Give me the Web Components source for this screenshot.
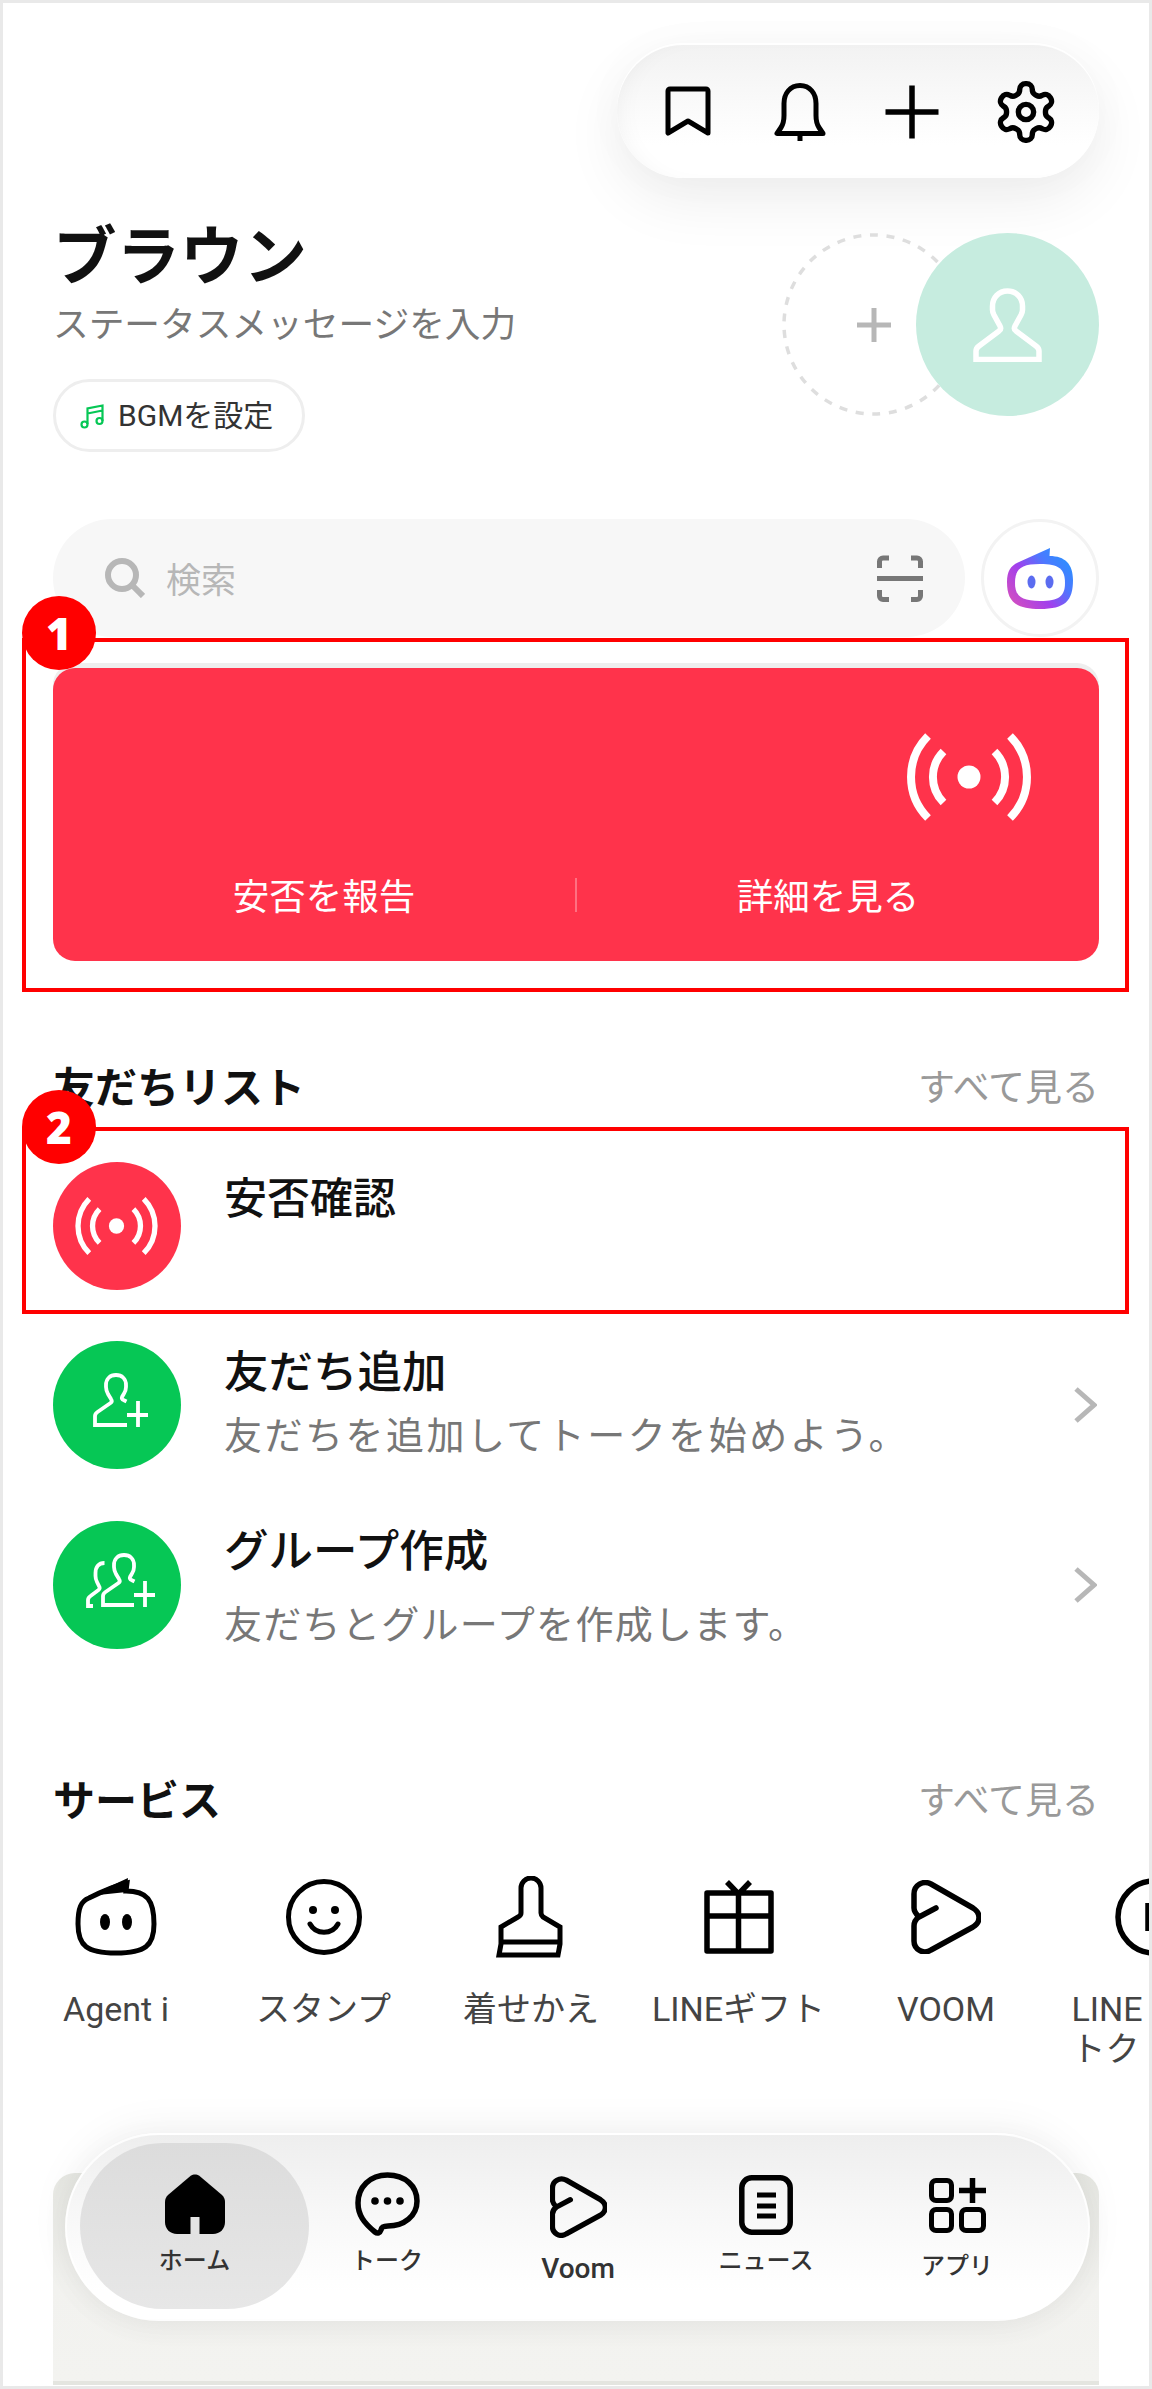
<!DOCTYPE html>
<html lang="ja"><head><meta charset="utf-8"><title>LINE</title>
<style>
html,body{margin:0;padding:0;background:#fff}
body{font-family:Roboto,"Noto Sans CJK JP",sans-serif;color:#111}
</style></head>
<body>
<line-app>
  <line-toolbar>
    <line-icon name="bookmark"></line-icon>
    <line-icon name="bell"></line-icon>
    <line-icon name="plus"></line-icon>
    <line-icon name="gear"></line-icon>
  </line-toolbar>
  <line-profile name="ブラウン" status="ステータスメッセージを入力" bgm="BGMを設定"></line-profile>
  <line-search placeholder="検索"></line-search>
  <note-box n="1" style="--pt:26px;--pb:27px;--bt:-46px">
    <line-safety report="安否を報告" details="詳細を見る"></line-safety>
  </note-box>
  <line-head more="すべて見る" style="--mt:68px">友だちリスト</line-head>
  <note-box n="2" style="--mt:17px;--pt:31px;--pb:20px;--bt:-41px">
    <line-row icon="broadcast-s" color="#ff334b" style="--mt:0px;--t:5px;--fs:43px"><span slot="title">安否確認</span></line-row>
  </note-box>
  <line-row icon="add" color="#06c755" chev style="--mt:27px;--t:0px;--g:12px;--ls:2.500px"><span slot="title">友だち追加</span><span slot="sub">友だちを追加してトークを始めよう。</span></line-row>
  <line-row icon="group" color="#06c755" chev style="--mt:52px;--t:-1px;--g:22px;--ls:1.300px"><span slot="title">グループ作成</span><span slot="sub">友だちとグループを作成します。</span></line-row>
  <line-head more="すべて見る" style="--mt:124px">サービス</line-head>
  <line-services>
    <line-service icon="agent">Agent i</line-service>
    <line-service icon="smile">スタンプ</line-service>
    <line-service icon="brush">着せかえ</line-service>
    <line-service icon="gift">LINEギフト</line-service>
    <line-service icon="voom">VOOM</line-service>
    <line-service icon="clipped" style="--align:left;--pl:6px">LINE<br>トク</line-service>
  </line-services>
  <line-banner></line-banner>
  <line-nav>
    <nav-item icon="home" active style="--w:229px;--t:31px;--g:12px">ホーム</nav-item>
    <nav-item icon="talk" style="--w:156px;--t:29px;--g:9px">トーク</nav-item>
    <nav-item icon="voom-s" style="--w:226px;--t:33px;--g:16px;--fs:28px">Voom</nav-item>
    <nav-item icon="news" style="--w:150px;--t:32px;--g:11px">ニュース</nav-item>
    <nav-item icon="apps" style="--w:232px;--t:35px;--g:18px">アプリ</nav-item>
  </line-nav>
</line-app>
<script>
const S='fill="none" stroke="currentColor" stroke-linecap="round" stroke-linejoin="round"';
const voom='<path d="M25 28 8 37C5 34 3 31 3 28V14C3 5 12 0 20 4L62 28C70 33 70 42 62 47L20 70C12 75 3 69 3 61V46C3 42 5 39 8 37"/>';
const bc=(w,h)=>`<svg width="${w}" height="${h}" viewBox="-64 -45 128 90"><circle r="11.5" fill="#fff"/><path fill="none" stroke="#fff" stroke-width="8" d="M-25.5-25.5A36 36 0 0 0-25.5 25.5M25.5-25.5A36 36 0 0 1 25.5 25.5M-41-41A58 58 0 0 0-41 41M41-41A58 58 0 0 1 41 41"/></svg>`;
const ICONS={
 bookmark:`<svg width="64" height="64" viewBox="0 0 64 64" ${S} stroke-width="5"><path d="M14 9h36a2 2 0 0 1 2 2v42L32 41 12 53V11a2 2 0 0 1 2-2z"/></svg>`,
 bell:`<svg width="64" height="64" viewBox="0 0 64 64" ${S} stroke-width="5"><path d="M32 5.500c-10 0-16 8-16 18v12c0 6-1 9-3 12l-4 6h46l-4-6c-2-3-3-6-3-12v-12c0-10-6-18-16-18z"/><path stroke-linecap="butt" d="M32 53v8"/></svg>`,
 plus:`<svg width="64" height="64" viewBox="0 0 64 64" fill="none" stroke="currentColor" stroke-width="5.500"><path d="M32 5.500v53M5.500 32h53"/></svg>`,
 gear:`<svg width="68" height="68" viewBox="0 0 24 24" ${S} stroke-width="1.9"><path d="M12.220 2h-.44a2 2 0 0 0-2 2v.18a2 2 0 0 1-1 1.730l-.43.25a2 2 0 0 1-2 0l-.15-.08a2 2 0 0 0-2.730.73l-.22.38a2 2 0 0 0 .73 2.730l.15.1a2 2 0 0 1 1 1.720v.51a2 2 0 0 1-1 1.740l-.15.09a2 2 0 0 0-.73 2.730l.22.38a2 2 0 0 0 2.730.73l.15-.08a2 2 0 0 1 2 0l.43.25a2 2 0 0 1 1 1.730V20a2 2 0 0 0 2 2h.44a2 2 0 0 0 2-2v-.18a2 2 0 0 1 1-1.730l.43-.25a2 2 0 0 1 2 0l.15.08a2 2 0 0 0 2.730-.73l.22-.39a2 2 0 0 0-.73-2.730l-.15-.08a2 2 0 0 1-1-1.740v-.5a2 2 0 0 1 1-1.740l.15-.09a2 2 0 0 0 .73-2.730l-.22-.38a2 2 0 0 0-2.730-.73l-.15.08a2 2 0 0 1-2 0l-.43-.25a2 2 0 0 1-1-1.730V4a2 2 0 0 0-2-2z"/><circle cx="12" cy="12" r="2.700"/></svg>`,
 person:`<svg width="69" height="74" viewBox="0 0 69 74" fill="none" stroke="#fff" stroke-width="5.500"><path d="M34.500 3c-9 0-15 7-15 15v4c0 2 .5 3 1.500 5l6 11c1 2 .5 4-1 5L6 58c-2 1.500-3 3-3 5v8.500h63V63c0-2-1-3.500-3-5L43 43c-1.500-1-2-3-1-5l6-11c1-2 1.500-3 1.500-5v-4c0-8-6-15-15-15z"/></svg>`,
 music:`<svg width="24" height="27" viewBox="0 0 24 27" fill="none" stroke="#06c755" stroke-width="2.200"><path d="M7.500 22V6.500L22.500 3.500V19M7.500 11.500 22.500 8.500"/><circle cx="4.500" cy="22.500" r="3"/><circle cx="19.500" cy="19" r="3"/></svg>`,
 search:`<svg width="40" height="40" viewBox="0 0 40 40" fill="none" stroke="#b7b7b7" stroke-width="6"><circle cx="17" cy="17" r="14"/><path d="M27 27 38 38"/></svg>`,
 scan:`<svg width="46" height="47" viewBox="0 0 46 47" fill="none" stroke="#777" stroke-width="5"><path d="M12 3H6A3.500 3.500 0 0 0 2.500 6.500V13M34 3h6a3.500 3.500 0 0 1 3.500 3.500V13M12 44.500H6A3.500 3.500 0 0 1 2.500 41V35M34 44.500h6a3.500 3.500 0 0 0 3.500-3.500V35M0 23.500H46"/></svg>`,
 logo:`<svg width="66" height="62" viewBox="0 0 66 62"><defs><linearGradient id="g" x1="0.05" y1="0.9" x2="0.95" y2="0.2"><stop offset="0" stop-color="#d34fc0"/><stop offset=".4" stop-color="#a23fec"/><stop offset=".72" stop-color="#4d78ff"/><stop offset="1" stop-color="#2b90ff"/></linearGradient></defs><path fill="url(#g)" d="M12 15 43 1l-.5 8C58 9 66 17 66 33 66 54 58 62 33 62 8 62 0 54 0 35 0 24 4 18 12 15z"/><path fill="#fff" d="M33 17C52 17 58 22 58 36 58 49 52 54 33 54 14 54 8 49 8 36 8 22 14 17 33 17z"/><ellipse cx="24.500" cy="35" rx="4" ry="6.500" fill="#5b6cf0"/><ellipse cx="42.500" cy="35" rx="4" ry="6.500" fill="#5b6cf0"/></svg>`,
 'broadcast-l':bc(128,90),
 'broadcast-s':bc(85,60),
 add:`<svg width="128" height="128" viewBox="0 0 128 128" fill="none" stroke="#fff" stroke-width="3.800"><path d="M74 84H42V75c0-2 1-3 2.500-4l13-9c1.500-1 1.500-2.500.5-4l-3-5c-1-2-2-4-2-7v-2c0-6 4-10 10-10s10 4 10 10v2c0 3-1 5-2 6.500l-2 3.500c-.5 1 0 2.500 1.500 3l3 1.500M85 60v26M74 74h21"/></svg>`,
 group:`<svg width="128" height="128" viewBox="0 0 128 128" fill="none" stroke="#fff" stroke-width="3.800"><path d="M81 84H50V75c0-2 1-3 2.500-4l13-9c1.500-1 1.500-2.500.5-4l-3-5c-1-2-2-4-2-7v-2c0-6 4-10 10-10s10 4 10 10v2c0 3-1 5-2 6.500l-2 3.500c-.5 1 0 2.500 1.500 3l3 1.500M92 60v26M81 74h21M40 85h-5v-6c0-2 1-3 2.500-4l8-6c1.500-1 1.500-2.500.5-4l-2-4c-1-2-1.500-4-1.500-6v-3c0-6 3-10 9-10"/></svg>`,
 chev:`<svg width="24" height="38" viewBox="0 0 24 38" fill="none" stroke="#b7b7b7" stroke-width="5"><path d="M3 3 21 19 3 35"/></svg>`,
 agent:`<svg width="82" height="78" viewBox="0 0 82 78"><path fill="none" stroke="currentColor" stroke-width="5" d="M14 20C28 13 40 8 52 5l-1 8C72 13 79 22 79 46 79 68 70 75 41 75 12 75 3 68 3 46 3 30 6 23 14 20z"/><path fill="currentColor" d="M14 18 53 0l-1.500 14z"/><ellipse cx="30" cy="44" rx="5" ry="8" fill="currentColor"/><ellipse cx="52" cy="44" rx="5" ry="8" fill="currentColor"/></svg>`,
 smile:`<svg width="78" height="78" viewBox="0 0 78 78" ${S} stroke-width="5"><circle cx="39" cy="39" r="35.500"/><circle cx="28" cy="32" r="4" fill="currentColor" stroke="none"/><circle cx="50" cy="32" r="4" fill="currentColor" stroke="none"/><path d="M25 46C31 57 47 57 53 46"/></svg>`,
 brush:`<svg width="72" height="82" viewBox="0 0 72 82" fill="none" stroke="currentColor" stroke-width="5"><path d="M26 37V12a10 10 0 0 1 20 0V37c0 2 1 3 2 4l17 10V68l-2 11H4L6 68V51l17-10c2-1 3-2 3-4zM6 66H65"/></svg>`,
 gift:`<svg width="70" height="74" viewBox="0 0 70 74" fill="none" stroke="currentColor" stroke-width="5.500" stroke-linejoin="round"><path d="M3 13H67V71H3zM34.500 13V71M3 36H67M23 2 34.500 14 46 2"/></svg>`,
 voom:`<svg width="70" height="74" viewBox="0 0 70 74" fill="none" stroke="currentColor" stroke-width="5.500" stroke-linecap="round" stroke-linejoin="round">${voom}</svg>`,
 'voom-s':`<svg width="57" height="62" viewBox="0 0 70 74" fill="none" stroke="currentColor" stroke-width="6.500" stroke-linecap="round" stroke-linejoin="round">${voom}</svg>`,
 clipped:`<svg width="80" height="80" viewBox="0 0 80 80" fill="none" stroke="currentColor" stroke-width="5.500"><circle cx="40" cy="40" r="36"/><path d="M34 26V54"/></svg>`,
 home:`<svg width="60" height="60" viewBox="0 0 60 60"><path fill="#000" d="M26 1.500 3 21C1 23 0 25 0 28V48C0 55 5 60 12 60H48C55 60 60 55 60 48V28C60 25 59 23 57 21L34 1.500C32 0 28 0 26 1.500z"/><rect x="25.500" y="43" width="9" height="17" fill="#e3e3e3"/></svg>`,
 talk:`<svg width="65" height="65" viewBox="0 0 65 65" fill="none" stroke="currentColor" stroke-width="5.500" stroke-linejoin="round"><path d="M32.500 3C15 3 3 15 3 31 3 43 9 51 20 60 22.500 62 25 61 26 58 26.500 55 28 54 33 54 49 54 62 44 62 29 62 14 50 3 32.500 3z"/><g fill="currentColor" stroke="none"><circle cx="20" cy="29" r="3.800"/><circle cx="32.500" cy="29" r="3.800"/><circle cx="45" cy="29" r="3.800"/></g></svg>`,
 news:`<svg width="54" height="60" viewBox="0 0 54 60" fill="none" stroke="currentColor" stroke-width="5.500"><rect x="2.800" y="2.800" width="48.400" height="54.400" rx="10"/><path stroke-width="5" d="M18 20H37M18 31H37M18 41H37"/></svg>`,
 apps:`<svg width="57" height="55" viewBox="0 0 57 55" fill="none" stroke="currentColor" stroke-width="5"><rect x="2.500" y="2.500" width="20" height="20" rx="4.500"/><rect x="2.500" y="31.500" width="20" height="21" rx="4.500"/><rect x="32.500" y="31.500" width="22" height="21" rx="4.500"/><path stroke-width="5.500" d="M43.500 0V25M30 12.500H57"/></svg>`
};
function comp(tag,css,html){
  customElements.define(tag,class extends HTMLElement{
    constructor(){super();this.attachShadow({mode:'open'});}
    connectedCallback(){
      const a=n=>this.getAttribute(n)||'';
      this.shadowRoot.innerHTML='<style>'+css+'</style>'+(typeof html==='function'?html(a,this):html);
    }
  });
}
const icon=n=>'<line-icon name="'+n+'"></line-icon>';
comp('line-icon',':host{display:inline-flex;line-height:0;flex:none}svg{display:block}',(a)=>ICONS[a('name')]);
comp('line-app',`:host{display:block;box-sizing:border-box;position:relative;width:1152px;height:2389px;border:3px solid #e9e9e9;padding:0 50px 0 50px;overflow:hidden;background:#fff}`,'<slot></slot>');
comp('line-toolbar',`:host{display:flex;align-items:center;box-sizing:border-box;width:482px;height:133px;margin:42px 0 0 auto;padding-left:39px;gap:48px;border-radius:67px;color:#000;
  background:linear-gradient(#f2f2f2,#fafafa 45%,#fff 75%);box-shadow:inset 14px 0 24px -14px rgba(0,0,0,.05),0 -2px 0 #fff,0 22px 60px rgba(0,0,0,.07),0 0 50px rgba(0,0,0,.025)}`,'<slot></slot>');
comp('line-profile',`:host{display:flex;justify-content:space-between;margin-top:38px;height:236px}
 h1{margin:0;font:700 63.500px/70px "Noto Sans CJK JP",sans-serif;color:#111}
 p{margin:14px 0 0;font:400 35.700px/44px "Noto Sans CJK JP",sans-serif;color:#777}
 .bgm{display:inline-flex;align-items:center;gap:14px;box-sizing:border-box;height:73px;width:252px;margin-top:35px;padding-left:24px;border:3px solid #eee;border-radius:37px;font:400 30px/36px Roboto,"Noto Sans CJK JP",sans-serif;color:#333}
 .av{display:flex;margin-top:17px}
 .dash{position:relative;width:183px;height:183px;display:grid;place-items:center}
 .dash svg{display:block;grid-area:1/1}
 .me{width:183px;height:183px;border-radius:50%;background:#c6ecdf;margin-left:-49px;display:grid;place-items:center;z-index:1}`,
 a=>`<div><h1>${a('name')}</h1><p>${a('status')}</p><span class="bgm">${icon('music')}<span>${a('bgm')}</span></span></div>
 <div class="av"><div class="dash"><svg width="183" height="183" viewBox="0 0 183 183" fill="none" stroke="#dedede" stroke-width="3.500"><circle cx="91.500" cy="91.500" r="89.500" stroke-dasharray="8 8.700"/></svg><svg width="34" height="34" viewBox="0 0 34 34" fill="none" stroke="#b7b7b7" stroke-width="5"><path d="M17 0V34M0 17H34"/></svg></div><div class="me">${icon('person')}</div></div>`);
comp('line-search',`:host{display:flex;gap:16px;margin-top:67px;height:118px}
 .box{flex:1;display:flex;align-items:center;background:#f7f7f7;border-radius:59px;padding:0 42px 0 52px}
 span{flex:1;margin-left:21px;font:400 35px/44px "Noto Sans CJK JP",sans-serif;color:#b7b7b7}
 .ai{width:118px;height:118px;box-sizing:border-box;border:3px solid #f3f3f3;border-radius:50%;display:grid;place-items:center}`,
 a=>`<div class="box">${icon('search')}<span>${a('placeholder')}</span>${icon('scan')}</div><div class="ai">${icon('logo')}</div>`);
comp('note-box',`:host{display:block;position:relative;margin:var(--mt,1px) -30px 0 -31px;padding:var(--pt) 26px var(--pb) 27px;border:4px solid #f00}
 b{position:absolute;left:-4px;top:var(--bt);width:74px;height:74px;border-radius:50%;background:#f00;color:#fff;display:grid;place-items:center;font:800 44px/1 "Open Sans",sans-serif}`,
 a=>`<slot></slot><b>${a('n')}</b>`);
comp('line-safety',`:host{display:flex;flex-direction:column;height:293px;background:#ff334b;border-radius:22px;box-shadow:0 -5px 0 #eee;color:#fff}
 .i{align-self:flex-end;margin:64px 66px 0 0}
 .f{display:flex;align-items:center;margin-top:44px;height:50px;padding:0 20px;font:400 36.500px/44px "Noto Sans CJK JP",sans-serif}
 .f span{flex:1;text-align:center}
 .f i{width:2px;height:34px;background:rgba(255,255,255,.3)}`,
 a=>`<div class="i">${icon('broadcast-l')}</div><div class="f"><span>${a('report')}</span><i></i><span>${a('details')}</span></div>`);
comp('line-head',`:host{display:flex;justify-content:space-between;align-items:center;margin-top:var(--mt);height:50px;font:700 42px/50px "Noto Sans CJK JP",sans-serif;color:#111}
 span{font:400 37px/44px "Noto Sans CJK JP",sans-serif;color:#999}`,
 a=>`<slot></slot><span>${a('more')}</span>`);
comp('line-row',`:host{display:flex;align-items:center;height:128px;margin-top:var(--mt,0);gap:43px}
 .c{width:128px;height:128px;border-radius:50%;display:grid;place-items:center;flex:none}
 .t{flex:1;align-self:flex-start;padding-top:max(var(--t),0px);margin-top:min(var(--t),0px)}
 .a{font:500 var(--fs,44.500px)/56px "Noto Sans CJK JP",sans-serif;color:#111}
 .b{margin-top:var(--g,0);font:400 38px/48px "Noto Sans CJK JP",sans-serif;color:#777;letter-spacing:var(--ls,0)}
 line-icon:last-child{margin-right:2px}`,
 (a,el)=>`<div class="c" style="background:${a('color')}">${icon(a('icon'))}</div><div class="t"><div class="a"><slot name="title"></slot></div><div class="b"><slot name="sub"></slot></div></div>${el.hasAttribute('chev')?icon('chev'):''}`);
comp('line-services',`:host{display:flex;gap:31.500px;margin:52px 0 0 -25px;color:#000}`,'<slot></slot>');
comp('line-service',`:host{display:block;flex:none;width:176px}
 .i{display:flex;align-items:center;justify-content:center;height:84px;color:#000}
 .l{margin-top:30px;font:400 34px/40px Roboto,"Noto Sans CJK JP",sans-serif;color:#444;text-align:var(--align,center);padding-left:var(--pl,0);white-space:nowrap}`,
 a=>`<div class="i">${icon(a('icon'))}</div><div class="l"><slot></slot></div>`);
comp('line-banner',`:host{display:block;box-sizing:border-box;height:212px;margin-top:104px;border-radius:22px 22px 0 0;background:linear-gradient(#e7e8e3,#f2f2ef 55%,#f3f3f0);border-bottom:4px solid #e4e5e0}`,'');
comp('line-nav',`:host{position:absolute;left:62px;top:2130px;box-sizing:border-box;width:1025px;height:188px;display:flex;padding:8px 0 0 13px;border-radius:94px;border:2.500px solid rgba(255,255,255,.85);background:linear-gradient(#eeeeee,#f7f7f7 40%,#fff 85%);box-shadow:0 -6px 40px rgba(0,0,0,.05),0 6px 30px rgba(0,0,0,.04);color:#000}`,'<slot></slot>');
comp('nav-item',`:host{display:flex;flex-direction:column;align-items:center;flex:none;box-sizing:border-box;width:var(--w);height:166px;padding-top:var(--t);border-radius:83px}
 :host([active]){background:linear-gradient(#dcdcdc,#e7e7e7)}
 span{margin-top:var(--g);font:500 var(--fs,24px)/30px Roboto,"Noto Sans CJK JP",sans-serif;color:#333}`,
 a=>`${icon(a('icon'))}<span><slot></slot></span>`);
</script>
</body></html>
